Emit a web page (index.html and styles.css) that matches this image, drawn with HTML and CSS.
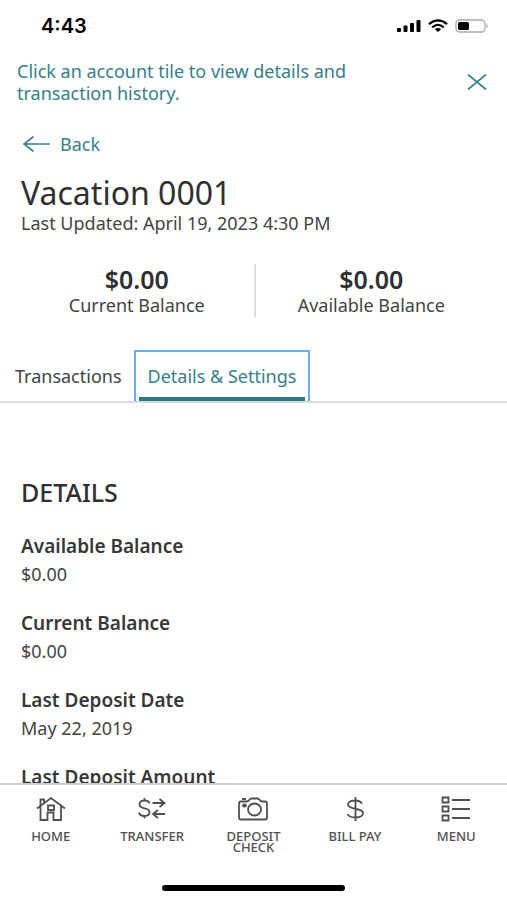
FILE: index.html
```html
<!DOCTYPE html>
<html lang="en">
<head>
<meta charset="utf-8">
<meta name="viewport" content="width=device-width, initial-scale=1">
<title>Vacation 0001</title>
<link rel="stylesheet" href="styles.css">
</head>
<body>
<div class="status">
  <span class="time">4:43</span>
  <div class="indicators">
    <svg width="24" height="14" viewBox="0 0 24 14" fill="#000"><rect y="9" width="4" height="4" rx="1"/><rect x="6.500" y="6.500" width="4" height="6.500" rx="1"/><rect x="13" y="4" width="4" height="9" rx="1"/><rect x="19.500" y="1" width="4" height="12" rx="1"/></svg>
    <svg width="20" height="14" viewBox="0 0 20 14" fill="none" stroke="#000" stroke-width="2.300"><path d="M1 5.200Q10-2.400 19 5.200M4.200 8.300Q10 3.400 15.800 8.300"/><path d="M6.800 10.200Q10 7.900 13.200 10.200L10 13Z" fill="#000" stroke="none"/></svg>
    <svg width="34" height="14" viewBox="0 0 34 14"><rect x="1" y="1" width="29" height="12" rx="3.500" fill="none" stroke="#aaa" stroke-width="1.300"/><rect x="3" y="3" width="11" height="8" rx="1.500" fill="#000"/><path d="M31.500 4.500Q34 7 31.500 9.500Z" fill="#aaa"/></svg>
  </div>
</div>
<main class="content">
  <div class="banner">
    <p class="banner-text">Click an account tile to view details and transaction history.</p>
    <button class="close" type="button" aria-label="Dismiss"><svg width="20" height="16" viewBox="0 0 20 16" fill="none" stroke="#35808a" stroke-width="1.700"><path d="M1 .5 19 15.500M19 .5 1 15.500"/></svg></button>
  </div>
  <a class="back" href="#accounts"><svg width="28" height="16" viewBox="0 0 28 16" fill="none" stroke="#35808a" stroke-width="1.600"><path d="M27 8H1M10.500.5 1 8l9.500 7.500"/></svg>Back</a>
  <header class="account">
    <h1>Vacation 0001</h1>
    <p>Last Updated: April 19, 2023 4:30 PM</p>
  </header>
  <section class="balances" aria-label="Balances">
    <div class="balance"><strong>$0.00</strong><span>Current Balance</span></div>
    <div class="balance"><strong>$0.00</strong><span>Available Balance</span></div>
  </section>
  <div class="tabs" role="tablist">
    <button class="tab" type="button" role="tab" aria-selected="false">Transactions</button>
    <button class="tab selected" type="button" role="tab" aria-selected="true">Details &amp; Settings</button>
  </div>
  <section class="details">
    <h2>DETAILS</h2>
    <dl>
      <div class="item"><dt>Available Balance</dt><dd>$0.00</dd></div>
      <div class="item"><dt>Current Balance</dt><dd>$0.00</dd></div>
      <div class="item"><dt>Last Deposit Date</dt><dd>May 22, 2019</dd></div>
      <div class="item"><dt>Last Deposit Amount</dt></div>
    </dl>
  </section>
</main>
<nav class="nav">
  <a href="#home"><svg width="30" height="26" viewBox="0 0 30 26"><path d="M1 12.500 15 2l14 10.500M4.500 10.500V24h7v-7.500h6V24h7.500V10.500M4.500 9.500V3.500h3.500v3M12 9.500h6v4.500h-6z"/></svg>HOME</a>
  <a href="#transfer"><svg width="30" height="26" viewBox="0 0 30 26"><path d="M12.500 7.500C12 5.300 10 4.500 7.500 4.500 4.500 4.500 2.500 6 2.500 8.500c0 5.500 10 2.500 10 7.500 0 2.500-2 4-5 4s-5-1.200-5.500-3.500M7.500 2v2.500M7.500 20v2.500M15.500 7h12M22.500 3l5 4-5 4M28 18H16M21 14l-5 4 5 4"/></svg>TRANSFER</a>
  <a href="#deposit"><svg width="30" height="26" viewBox="0 0 30 26"><path d="M3 5.500h5.500Q10.500 5.500 12 3.300 12.500 2.500 13.500 2.500h6Q20.500 2.500 21 3.300 22.500 5.500 24 5.500H27q2 0 2 2V21.500q0 2-2 2H3q-2 0-2-2V7.500q0-2 2-2zM4 3h4"/><ellipse cx="16.500" cy="13.500" rx="6.500" ry="6"/><ellipse cx="6.500" cy="9.500" rx="1.500" ry="1.200" fill="#505050"/></svg>DEPOSIT CHECK</a>
  <a href="#bill-pay"><svg width="30" height="26" viewBox="0 0 30 26"><path d="M22 7.500C20.500 5.200 18 4.500 15 4.500c-4 0-7 1.500-7 4 0 5.500 15 3 15 8.500 0 3-3.500 4.500-7.500 4.500S8.500 20.500 7.500 18M15.500 1v24"/></svg>BILL PAY</a>
  <a href="#menu"><svg width="30" height="26" viewBox="0 0 30 26"><path d="M1.500 1.500h6v5h-6zM1.500 10.500h6v5h-6zM1.500 19.500h6v5h-6zM11 4h18M11 13h18M11 22h18"/></svg>MENU</a>
</nav>
<div class="home-bar"></div>
</body>
</html>
```
FILE: styles.css
```css
* { box-sizing: border-box; }
body {
  margin: 0;
  height: 100vh;
  display: flex;
  flex-direction: column;
  overflow: hidden;
  background: #fff;
  color: #444;
  font: 18px/22px "Noto Sans", "Open Sans", sans-serif;
}
h1, h2, p, dl, dd { margin: 0; }
button { border: 0; background: none; font: inherit; color: inherit; }
a { color: inherit; text-decoration: none; }
svg { display: block; }

.status {
  display: flex;
  flex: none;
  align-items: center;
  justify-content: space-between;
  height: 52px;
  padding: 0 18px 0 41px;
}
.time { font: 600 20px/22px Inter, sans-serif; color: #000; }
.indicators { display: flex; align-items: center; gap: 7px; }

.content { flex: 1; min-height: 0; overflow: hidden; }
.banner {
  display: flex;
  align-items: center;
  justify-content: space-between;
  padding: 8px 20px 0 17px;
  color: #35808a;
}
.banner-text { max-width: 360px; }
.close { padding: 0; }
.back {
  display: flex;
  width: fit-content;
  align-items: center;
  gap: 9px;
  margin: 29px 0 0 23px;
  color: #35808a;
}
.account { padding: 19px 21px 0; }
h1 { font-size: 32px; line-height: 38px; font-weight: 400; color: #303030; }

.balances {
  display: grid;
  grid-template-columns: 1fr 1fr;
  margin: 30px 20px 0;
}
.balance { display: flex; flex-direction: column; align-items: center; height: 53px; }
.balance + .balance { border-left: 2px solid #ddd; }
.balance strong { font-size: 25px; line-height: 30px; font-weight: 600; color: #303030; }

.tabs {
  display: flex;
  margin-top: 33px;
  padding-left: 3px;
  border-bottom: 2px solid #ddd;
}
.tab { height: 51px; padding: 0 12px; }
.selected {
  padding-bottom: 2px;
  border: 2px solid #6eaef0;
  border-bottom: 0;
  background: linear-gradient(#2f7980, #2f7980) bottom / calc(100% - 6px) 4px no-repeat;
  color: #35808a;
}

.details { padding: 77px 21px 0; }
h2 { font-size: 25px; line-height: 24px; font-weight: 500; color: #303030; }
dl { margin-top: 31px; }
.item { margin-bottom: 27px; }
dt { margin-bottom: 6px; font-size: 19px; font-weight: 600; color: #383838; }

.nav {
  display: grid;
  flex: none;
  grid-template-columns: repeat(5, 1fr);
  height: 98px;
  padding-top: 11px;
  border-top: 2px solid #ccc;
  color: #505050;
  font-size: 13px;
  line-height: 11px;
  font-weight: 500;
  text-align: center;
}
.nav a { display: flex; flex-direction: column; align-items: center; gap: 9px; padding: 0 15px; }
.nav svg { flex: none; fill: none; stroke: #505050; stroke-width: 1.8; }
.home-bar {
  flex: none;
  width: 36%;
  height: 6px;
  margin: 4px auto 9px;
  border-radius: 3px;
  background: #000;
}
```
